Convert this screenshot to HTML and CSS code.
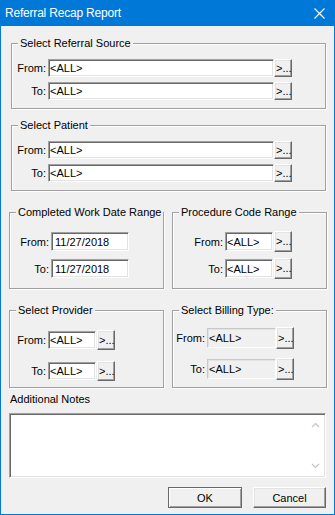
FILE: index.html
```html
<!DOCTYPE html>
<html lang="en">
<head>
    <meta charset="UTF-8">
    <meta name="viewport" content="width=device-width, initial-scale=1.0">
    <title>Referral Recap Report</title>
    <link rel="stylesheet" href="styles.css">
</head>
<body>
    <div class="window">
        <div class="titlebar">
            <span class="title">Referral Recap Report</span>
            <svg class="close" width="11" height="11" viewBox="0 0 11 11">
                <path d="M0.5 0.5 L10.5 10.5 M10.5 0.5 L0.5 10.5" stroke="#fff" stroke-width="1.1" fill="none"/>
            </svg>
        </div>
        <div class="client">
            <div class="group wide g-source">
                <div class="caption">Select Referral Source</div>
                <div class="row">
                    <label class="lbl">From:</label>
                    <input class="field" type="text" value="&lt;ALL&gt;">
                    <button class="browse">&gt;...</button>
                </div>
                <div class="row">
                    <label class="lbl">To:</label>
                    <input class="field" type="text" value="&lt;ALL&gt;">
                    <button class="browse">&gt;...</button>
                </div>
            </div>

            <div class="group wide g-patient">
                <div class="caption">Select Patient</div>
                <div class="row">
                    <label class="lbl">From:</label>
                    <input class="field" type="text" value="&lt;ALL&gt;">
                    <button class="browse">&gt;...</button>
                </div>
                <div class="row">
                    <label class="lbl">To:</label>
                    <input class="field" type="text" value="&lt;ALL&gt;">
                    <button class="browse">&gt;...</button>
                </div>
            </div>

            <div class="pair pair-dates">
                <div class="group half g-date">
                    <div class="caption">Completed Work Date Range</div>
                    <div class="row">
                        <label class="lbl">From:</label>
                        <input class="field" type="text" value="11/27/2018">
                    </div>
                    <div class="row">
                        <label class="lbl">To:</label>
                        <input class="field" type="text" value="11/27/2018">
                    </div>
                </div>
                <div class="group half g-proc">
                    <div class="caption">Procedure Code Range</div>
                    <div class="row">
                        <label class="lbl">From:</label>
                        <input class="field" type="text" value="&lt;ALL&gt;">
                        <button class="browse">&gt;...</button>
                    </div>
                    <div class="row">
                        <label class="lbl">To:</label>
                        <input class="field" type="text" value="&lt;ALL&gt;">
                        <button class="browse">&gt;...</button>
                    </div>
                </div>
            </div>

            <div class="pair pair-people">
                <div class="group half g-provider">
                    <div class="caption">Select Provider</div>
                    <div class="row">
                        <label class="lbl">From:</label>
                        <input class="field" type="text" value="&lt;ALL&gt;">
                        <button class="browse">&gt;...</button>
                    </div>
                    <div class="row">
                        <label class="lbl">To:</label>
                        <input class="field" type="text" value="&lt;ALL&gt;">
                        <button class="browse">&gt;...</button>
                    </div>
                </div>
                <div class="group half g-billing">
                    <div class="caption">Select Billing Type:</div>
                    <div class="row">
                        <label class="lbl">From:</label>
                        <input class="field disabled" type="text" value="&lt;ALL&gt;" readonly>
                        <button class="browse">&gt;...</button>
                    </div>
                    <div class="row">
                        <label class="lbl">To:</label>
                        <input class="field disabled" type="text" value="&lt;ALL&gt;" readonly>
                        <button class="browse">&gt;...</button>
                    </div>
                </div>
            </div>

            <div class="notes-label">Additional Notes</div>
            <div class="notes">
                <div class="notes-text"></div>
                <div class="scroll">
                    <svg width="9" height="6" viewBox="0 0 9 6"><path d="M1 5 L4.5 1.5 L8 5" stroke="#c4c4c4" stroke-width="1.2" fill="none"/></svg>
                    <svg width="9" height="6" viewBox="0 0 9 6"><path d="M1 1 L4.5 4.5 L8 1" stroke="#c4c4c4" stroke-width="1.2" fill="none"/></svg>
                </div>
            </div>

            <div class="actions">
                <button class="cmd default">OK</button>
                <button class="cmd">Cancel</button>
            </div>
        </div>
    </div>
</body>
</html>
```

FILE: styles.css
```css
body {
    margin: 0;
    font-family: "Liberation Sans", Arial, sans-serif;
    font-size: 11px;
    color: #000;
}
.window {
    width: 335px;
    height: 515px;
    box-sizing: border-box;
    border: 1px solid #0078d7;
    background: #f0f0f0;
    display: flex;
    flex-direction: column;
}
.titlebar {
    height: 25px;
    background: #0078d7;
    display: flex;
    align-items: center;
    justify-content: space-between;
    padding: 0 9px 0 4px;
    flex: none;
}
.title {
    color: #fff;
    font-size: 12px;
    letter-spacing: -0.2px;
    padding-bottom: 1px;
}
.close {
    display: block;
}
.client {
    flex: 1;
    background: #f0f0f0;
}

/* etched group frames */
.group {
    box-sizing: border-box;
    border: 1px solid #a0a0a0;
    box-shadow: inset 1px 1px #fff, 1px 1px #fff;
}
.caption {
    width: fit-content;
    margin: -7px 0 0 6px;
    padding: 0 2px;
    line-height: 13px;
    background: #f0f0f0;
    white-space: nowrap;
}
.wide {
    width: 315px;
    margin-left: 10px;
    padding-bottom: 8px;
}
.g-source {
    margin-top: 17px;
}
.g-patient {
    margin-top: 16px;
}
.wide .row {
    height: 18px;
    margin-top: 5px;
}
.wide .row:nth-child(2) {
    margin-top: 9px;
}

.pair {
    display: flex;
    gap: 8px;
    margin-left: 8px;
    margin-top: 21px;
}
.half {
    width: 155px;
}

.row {
    display: flex;
    align-items: center;
}
.lbl {
    flex: none;
    text-align: right;
    white-space: nowrap;
    margin-right: 2px;
}

.g-source .lbl, .g-patient .lbl {
    width: 34px;
}
.wide .field {
    width: 226px;
    height: 18px;
}
.wide .browse {
    width: 18px;
    height: 18px;
}

.g-date, .g-proc {
    padding-bottom: 9px;
}
.g-date .row, .g-proc .row {
    height: 21px;
    margin-top: 6px;
}
.g-date .row:nth-child(2), .g-proc .row:nth-child(2) {
    margin-top: 12px;
}
.g-date .lbl {
    width: 39px;
}
.g-date .field {
    width: 78px;
    height: 19px;
    padding-left: 3px;
}
.g-proc .lbl {
    width: 50px;
}
.g-proc .field {
    width: 48px;
    height: 19px;
    margin-right: 1px;
}
.g-proc .browse {
    width: 18px;
    height: 21px;
}

.g-provider {
    padding-bottom: 6px;
}
.g-provider .row {
    height: 20px;
    margin-top: 11px;
}
.g-provider .row:nth-child(2) {
    margin-top: 13px;
}
.g-provider .lbl {
    width: 36px;
}
.g-provider .field {
    width: 48px;
    height: 18px;
    margin-right: 1px;
}
.g-provider .browse {
    width: 18px;
    height: 20px;
}

.g-billing {
    padding-bottom: 7px;
}
.g-billing .row {
    height: 22px;
    margin-top: 9px;
}
.g-billing .row:nth-child(2) {
    margin-top: 10px;
}
.g-billing .lbl {
    width: 32px;
}
.g-billing .field {
    width: 69px;
    height: 20px;
}
.g-billing .browse {
    width: 18px;
    height: 22px;
}

/* sunken edit boxes */
.field {
    box-sizing: border-box;
    margin: 0;
    padding: 0 1px;
    font: inherit;
    color: #000;
    background: #fff;
    border: 1px solid;
    border-color: #a0a0a0 #fff #fff #a0a0a0;
    box-shadow: inset 1px 1px #696969, inset -1px -1px #e3e3e3;
    outline: none;
}
.field.disabled {
    background: #f0f0f0;
    border-color: #c8c8c8 #fff #fff #c8c8c8;
    box-shadow: inset 1px 1px #e3e3e3, inset -1px -1px #f0f0f0;
}

/* raised push buttons */
.browse, .cmd {
    box-sizing: border-box;
    margin: 0;
    font: inherit;
    color: #000;
    background: #f0f0f0;
    border: 1px solid;
    border-color: #fff #696969 #696969 #fff;
    box-shadow: inset -1px -1px #a0a0a0, inset 1px 1px #e3e3e3;
}
.browse {
    flex: none;
    padding: 0 0 0 1px;
    text-align: left;
    line-height: 1;
}

.notes-label {
    margin: 5px 0 0 9px;
    line-height: 13px;
}
.notes {
    display: flex;
    box-sizing: border-box;
    width: 317px;
    height: 65px;
    margin: 7px 0 0 8px;
    background: #fff;
    border: 1px solid;
    border-color: #a0a0a0 #fff #fff #a0a0a0;
    box-shadow: inset 1px 1px #696969, inset -1px -1px #e3e3e3;
}
.notes-text {
    flex: 1;
}
.scroll {
    width: 17px;
    margin: 1px 1px 1px 0;
    display: flex;
    flex-direction: column;
    justify-content: space-between;
    align-items: center;
    padding: 7px 0;
    box-sizing: border-box;
}
.scroll svg {
    display: block;
}

.actions {
    display: flex;
    justify-content: flex-end;
    gap: 11px;
    margin: 9px 8px 0 0;
}
.cmd {
    width: 73px;
    height: 21px;
    padding: 0;
}
.cmd.default {
    width: 74px;
    border-color: #696969;
    box-shadow: inset 1px 1px #fff, inset -1px -1px #a0a0a0;
}
```
